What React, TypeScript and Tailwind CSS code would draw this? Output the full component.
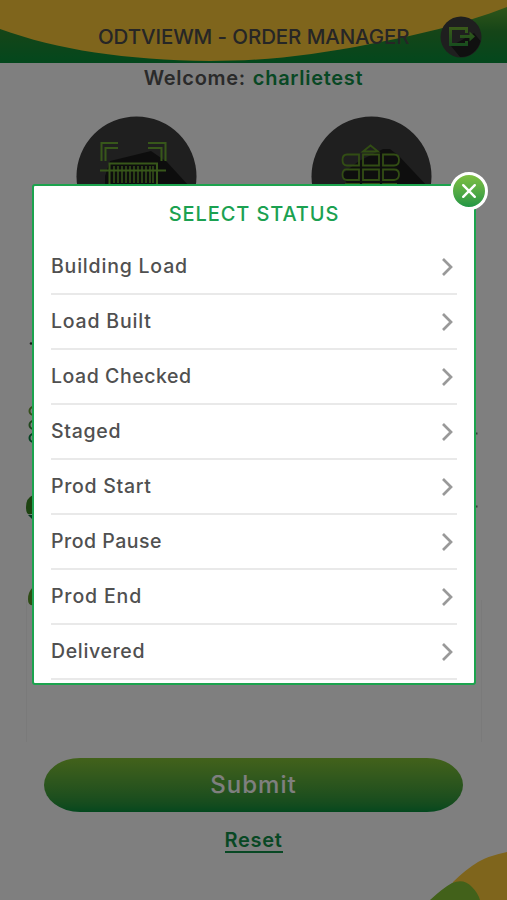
const statuses = [
  { label: "Building Load", tracking: "tracking-[0.8px]" },
  { label: "Load Built", tracking: "tracking-[0.8px]" },
  { label: "Load Checked", tracking: "tracking-[0.55px]" },
  { label: "Staged", tracking: "tracking-[0.7px]" },
  { label: "Prod Start", tracking: "tracking-[0.7px]" },
  { label: "Prod Pause", tracking: "tracking-[0.5px]" },
  { label: "Prod End", tracking: "tracking-[0.85px]" },
  { label: "Delivered", tracking: "tracking-[0.65px]" },
];

function HeaderArt() {
  return (
    <svg className="absolute inset-0" width="507" height="63" viewBox="0 0 507 63">
      <defs>
        <linearGradient id="head" x1="0" y1="0" x2="0" y2="1">
          <stop offset="0" stopColor="#6db534" />
          <stop offset="0.5" stopColor="#2b8a30" />
          <stop offset="1" stopColor="#068f3a" />
        </linearGradient>
      </defs>
      <rect width="507" height="63" fill="url(#head)" />
      <path d="M0 0H507V7C460 25 418 35 370 44C315 55 265 61 210 61C125 60 58 50 0 29Z" fill="#ffca38" />
    </svg>
  );
}

function LogoutIcon() {
  return (
    <svg width="42" height="42" viewBox="0 0 42 42">
      <defs>
        <linearGradient id="exit" gradientUnits="userSpaceOnUse" x1="20" y1="11" x2="20" y2="30">
          <stop offset="0" stopColor="#76b534" />
          <stop offset="1" stopColor="#2f9a3c" />
        </linearGradient>
      </defs>
      <circle cx="21" cy="21" r="20.5" fill="#3e3e3e" />
      <path d="M11 30L22 24L34 17L40.500 25A20.500 20.500 0 0 1 20 41Z" fill="#202020" />
      <g fill="none" stroke="url(#exit)" strokeWidth="3">
        <path d="M26.500 17V12.500H10.500V28.500H26.500V25" />
      </g>
      <path d="M20 19H29.500V15.500L35 20.500L29.500 25.500V22H20Z" fill="url(#exit)" />
    </svg>
  );
}

function ScanIcon() {
  return (
    <svg width="121" height="121" viewBox="0 0 121 121">
      <circle cx="60.5" cy="60.5" r="60" fill="#3e3e3e" />
      <path d="M34 45L75 35L91 46L113 70L100 105L60 120L29 90V60Z" fill="#1b1b1b" />
      <g fill="none" stroke="#6fae34" strokeWidth="2">
        <path d="M25.500 45V27H42M29.500 45V32H42M72 27H89.500V45M72 32H85.500V45" />
        <path d="M33.500 75V47.500H81V75M24 54.500H90" />
        <path d="M38 50V67M42 50V67M46 50V67M50 50V67M54 50V67M58 50V67M62 50V67M66 50V67M70 50V67M74 50V67M77 50V67" strokeWidth="1.4" />
      </g>
    </svg>
  );
}

function TruckGridIcon() {
  return (
    <svg width="121" height="121" viewBox="0 0 121 121">
      <circle cx="60.5" cy="60.5" r="60" fill="#3e3e3e" />
      <path d="M31 58L48 45L72 33L79 33L88 40L118 72L100 105L60 115Z" fill="#1d1d1d" />
      <g fill="none" stroke="#649a28" strokeWidth="1.8">
        <path d="M52 35.500L59.500 29.500L67 35.500Z" />
        <path d="M48 38.500V49.500H36Q31.500 49.500 31.500 44T36 38.500ZM52 38.500H68V49.500H52ZM72 38.500H83Q88 38.500 88 44T83 49.500H72Z" />
        <path d="M48 53.500V64H36Q31.500 64 31.500 58.500T36 53.500ZM52 53.500H68V64H52ZM72 53.500H83Q88 53.500 88 58.500T83 64H72Z" />
        <path d="M34 68H48V78M52 78V68H68V78M72 78V68H86" />
      </g>
    </svg>
  );
}

function EdgeArt() {
  return (
    <svg className="shrink-0" width="507" height="521" viewBox="0 237 507 521">
      <path d="M26.500 600V742M481.500 600V742" stroke="#f5f5f5" />
      <circle cx="31" cy="343.500" r="1.300" fill="#333" />
      <circle cx="33.500" cy="411" r="4" fill="none" stroke="#6a9d35" strokeWidth="2" />
      <circle cx="33.500" cy="425" r="4" fill="none" stroke="#418c3b" strokeWidth="2" />
      <circle cx="33.500" cy="438" r="4" fill="none" stroke="#098343" strokeWidth="2" />
      <path d="M33 495Q26 498 26 507T31 514H33Z" fill="#3b8623" />
      <path d="M28 515H33V520Z" fill="#157342" />
      <path d="M33 587Q28 592 28 599T33 605Z" fill="#5d982b" />
      <path d="M475 433.500H477.500M475 506.500H477.500" stroke="#777" strokeWidth="2" />
    </svg>
  );
}

function CornerArt() {
  return (
    <svg className="absolute right-0 bottom-0" width="78" height="50" viewBox="0 0 78 50">
      <path d="M78 2Q59 6 49 12Q36 20 24 32L20 50H78Z" fill="#ffca38" />
      <path d="M1 50Q14 38 23 33Q35 28 43 37Q49 43 51 50Z" fill="#84c334" />
    </svg>
  );
}

export default function App() {
  return (
    <div className="relative flex h-[900px] w-[507px] flex-col overflow-hidden bg-white font-['Inter','Liberation_Sans',sans-serif]">
      <header className="relative h-[63px] shrink-0">
        <HeaderArt />
        <div className="relative flex h-full items-center justify-between pt-[10px] pr-[25px] pl-[98px]">
          <h1 className="text-[20.5px] leading-6 font-medium tracking-[-0.1px] whitespace-nowrap text-[#4c4c4c]">ODTVIEWM - ORDER MANAGER</h1>
          <LogoutIcon />
        </div>
      </header>
      <p className="flex h-[30px] shrink-0 items-center justify-center gap-[7px] text-[20px] font-semibold tracking-[0.7px] whitespace-nowrap text-[#555]">
        <span>Welcome:</span>
        <span className="text-[#109049]">charlietest</span>
      </p>
      <div className="flex shrink-0 justify-between pt-[23px] pr-[75px] pl-[76px]">
        <ScanIcon />
        <TruckGridIcon />
      </div>
      <EdgeArt />
      <button className="mx-[44px] flex h-[54px] shrink-0 items-center justify-center rounded-[36px/27px] bg-linear-to-b from-[#85c436] to-[#02903c] text-[24px] font-medium tracking-[1px] text-white">Submit</button>
      <div className="flex justify-center pt-[17px]">
        <a className="border-b-2 border-[#109049] text-[20px] leading-[22px] font-semibold tracking-[0.7px] text-[#109049]">Reset</a>
      </div>
      <CornerArt />

      <div className="absolute inset-0 bg-black/50" />
      <section className="absolute top-[184px] left-[32px] flex h-[501px] w-[444px] flex-col overflow-hidden rounded-[3px] border-2 border-[#1ca34e] bg-white px-[17px]">
        <h2 className="flex h-[54px] shrink-0 items-center justify-center pt-[2px] text-[20px] font-medium tracking-[0.9px] text-[#1ba151]">SELECT STATUS</h2>
        <ul>
          {statuses.map((status) => (
            <li key={status.label} className="flex h-[55px] items-center justify-between border-b-2 border-[#e9e9e9] pr-[3px]">
              <span className={`text-[19.5px] font-medium text-[#505050] ${status.tracking}`}>{status.label}</span>
              <svg width="13" height="18" viewBox="0 0 13 18" fill="none" stroke="#999" strokeWidth="2.700">
                <path d="M2 1L10 9L2 17" />
              </svg>
            </li>
          ))}
        </ul>
      </section>
      <button className="absolute top-[172px] left-[450px] flex size-[38px] items-center justify-center rounded-full border-[3px] border-white bg-linear-to-b from-[#83c341] to-[#099345] bg-origin-border">
        <svg width="16" height="16" viewBox="0 0 16 16" stroke="white" strokeWidth="2.400" strokeLinecap="round">
          <path d="M2.200 2.200L13.800 13.800M13.800 2.200L2.200 13.800" />
        </svg>
      </button>
    </div>
  );
}
